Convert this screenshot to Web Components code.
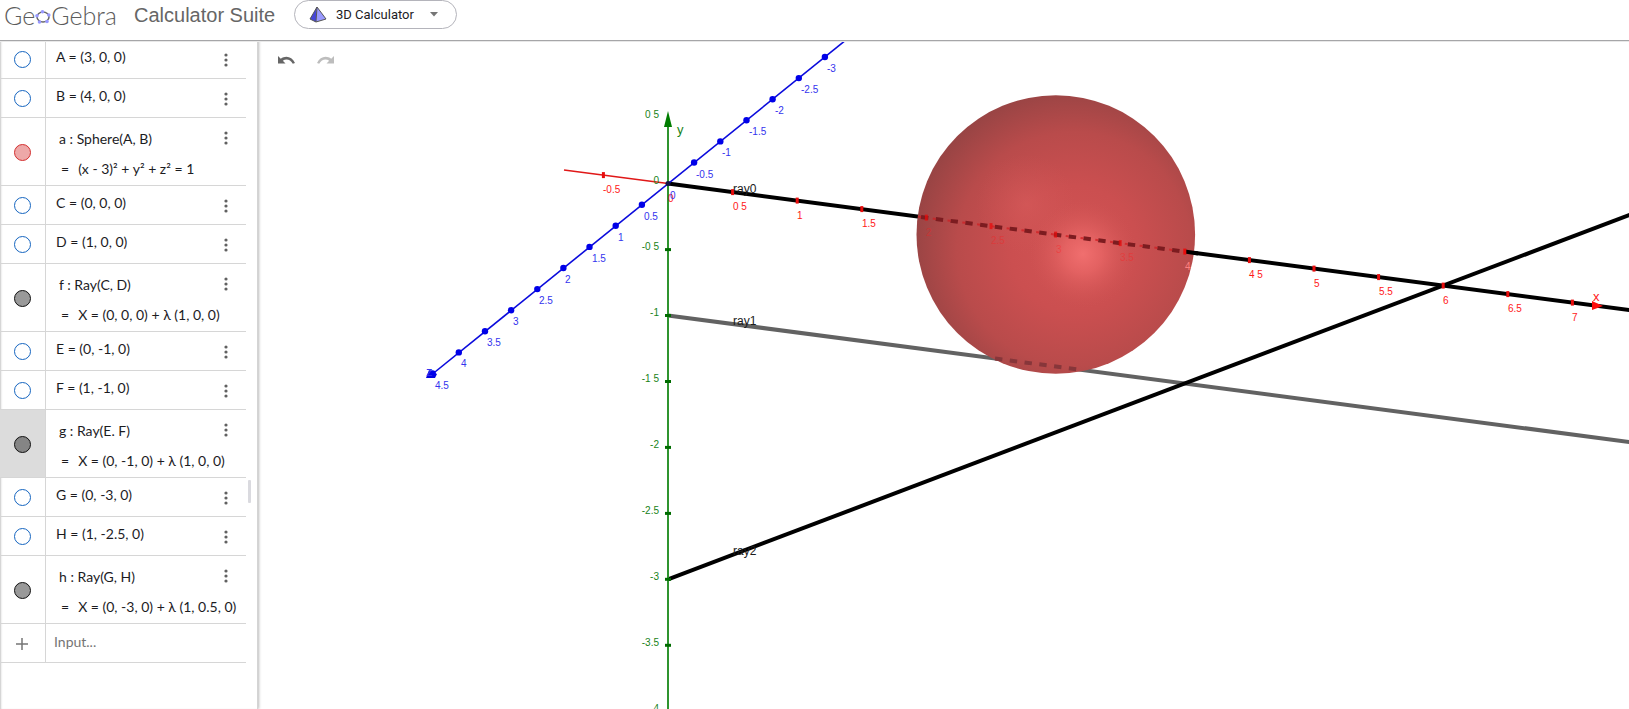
<!DOCTYPE html>
<html lang="en">
<head>
<meta charset="utf-8">
<title>GeoGebra Calculator Suite</title>
<style>
  html, body { margin: 0; height: 100%; background: #fff; }
  body { font-family: "Liberation Sans", Arial, sans-serif; overflow: hidden; }
</style>
</head>
<body>
<calc-app></calc-app>

<template id="tpl-app">
  <style>
    :host { display: flex; flex-direction: column; height: 100vh; }
    main { flex: 1; display: flex; min-height: 0; }
    graphics-view { flex: 1; min-width: 0; }
  </style>
  <app-header></app-header>
  <main>
    <algebra-panel>
      <algebra-row kind="point">A = (3, 0, 0)</algebra-row>
      <algebra-row kind="point">B = (4, 0, 0)</algebra-row>
      <algebra-row kind="sphere">a : Sphere(A, B)<span slot="value">(x - 3)² + y² + z² = 1</span></algebra-row>
      <algebra-row kind="point">C = (0, 0, 0)</algebra-row>
      <algebra-row kind="point">D = (1, 0, 0)</algebra-row>
      <algebra-row kind="ray">f : Ray(C, D)<span slot="value">X = (0, 0, 0) + λ (1, 0, 0)</span></algebra-row>
      <algebra-row kind="point">E = (0, -1, 0)</algebra-row>
      <algebra-row kind="point">F = (1, -1, 0)</algebra-row>
      <algebra-row kind="ray" selected>g : Ray(E. F)<span slot="value">X = (0, -1, 0) + λ (1, 0, 0)</span></algebra-row>
      <algebra-row kind="point">G = (0, -3, 0)</algebra-row>
      <algebra-row kind="point">H = (1, -2.5, 0)</algebra-row>
      <algebra-row kind="ray">h : Ray(G, H)<span slot="value">X = (0, -3, 0) + λ (1, 0.5, 0)</span></algebra-row>
      <algebra-input></algebra-input>
    </algebra-panel>
    <graphics-view></graphics-view>
  </main>
</template>

<template id="tpl-header">
  <style>
    :host { display: flex; align-items: flex-start; height: 39px; padding-left: 4px; box-sizing: border-box;
      background: #fff; position: relative; z-index: 2;
      box-shadow: 0 1px 0 #fff, 0 2px 0 #a6a6a8, 0 3px 0 #e8e8e8; }
    .logo { display: flex; align-items: center; width: 112px; height: 30px; color: #5c5c5c; text-decoration: none;
      font: 300 25px/30px Lato, "Open Sans", sans-serif; }
    .logo svg { flex: none; width: 16px; height: 16px; margin-top: 3px; }
    h1 { margin: 0 0 0 18px; width: 160px; font-size: 20px; line-height: 30px; font-weight: 400; color: #666; }
    .mode { display: grid; grid-template-columns: 40px 1fr 36px; align-items: center; width: 163px; height: 29px;
      box-sizing: border-box; border: 1px solid #b4b4bb; border-radius: 15px; }
    select { grid-area: 1 / 1 / 2 / 4; width: 100%; height: 27px; padding: 0 36px 0 41px; appearance: none; border: 0;
      border-radius: 14px; background: none; color: #1c1c1f; font: 13px/27px Roboto, sans-serif; }
    .mode svg { pointer-events: none; }
    .solid { grid-area: 1 / 1; width: 18px; height: 18px; margin-left: 14px; }
    .arrow { grid-area: 1 / 3; width: 8px; height: 5px; margin-left: 10px; }
  </style>
  <a class="logo" href="#" aria-label="GeoGebra home"><span>Ge</span><svg viewBox="0 0 16 16"><ellipse cx="8" cy="8" rx="6" ry="5" fill="none" stroke="#666" stroke-width="1.5"/><g fill="#9999ff"><circle cx="7.500" cy="2.700" r="1.800"/><circle cx="13.800" cy="6" r="1.800"/><circle cx="12" cy="12.500" r="1.800"/><circle cx="4.500" cy="13" r="1.800"/><circle cx="2" cy="6.800" r="1.800"/></g></svg><span>Gebra</span></a>
  <h1>Calculator Suite</h1>
  <div class="mode">
    <select aria-label="Calculator"><option>3D Calculator</option></select>
    <svg class="solid" viewBox="0 0 18 18"><path d="M8 1 1 13 7 16Z" fill="#4545d8"/><path d="M8 1 7 16 17 13Z" fill="#9999ff"/><path d="M8 1 1 13 7 16 17 13ZM8 1 7 16" fill="none" stroke="#555" stroke-width="1"/></svg>
    <svg class="arrow" viewBox="0 0 8 5"><path d="M0 0h8L4 4.500Z" fill="#757575"/></svg>
  </div>
</template>

<template id="tpl-panel">
  <style>
    :host { display: flex; position: relative; flex: none; width: 258px; box-sizing: border-box; background: #fff; z-index: 1;
      border-right: 1px solid #d4d4d4; border-radius: 0 3px 0 0;
      box-shadow: 1px 0 3px #bbb, inset 2px 0 2px -1px #c8c8c8; }
    .list { width: 246px; padding-top: 1px; }
    .thumb { position: absolute; right: 6px; top: 441px; width: 3px; height: 23px; border-radius: 1px; background: #dadadf; }
  </style>
  <div class="list" role="list"><slot></slot></div>
  <div class="thumb"></div>
</template>

<template id="tpl-row">
  <style>
    :host { display: grid; grid-template-columns: 46px minmax(0, 1fr) 30px; height: 39px; box-sizing: border-box;
      border-bottom: 1px solid #d6d6d6; color: #1c1c1f; font: 14px/18px Lato, "Noto Sans", sans-serif; }
    :host([tall]) { height: 68px; }
    .side { display: grid; place-items: center; border-right: 1px solid #d6d6d6; }
    :host([selected]) .side { background: #dcdcdc; }
    .marble { width: 17px; height: 17px; margin: 1px 1px 0 0; padding: 0; border-radius: 50%; border: 1px solid #1565c0; background: #fff;
      box-sizing: border-box; }
    :host([kind="sphere"]) .marble { border-color: #d32f2f; background: #eda8a8; }
    :host([kind="ray"]) .marble { border-color: #111; background: #999; }
    :host([selected]) .marble { background: #858585; }
    .text { padding: 8px 0 0 10px; white-space: nowrap; }
    :host([tall]) .text { padding: 12px 0 0 13px; }
    .value { display: none; margin: 12px 0 0 2px; gap: 9px; }
    :host([tall]) .value { display: flex; }
    .more { align-self: start; display: grid; place-items: center; width: 20px; height: 24px; margin: 8px 0 0; padding: 0; border: 0; background: none; }
    .more svg { width: 4px; height: 14px; }
  </style>
  <div class="side"><button class="marble" aria-label="Show or hide"></button></div>
  <div class="text"><slot></slot><div class="value"><span>=</span><slot name="value"></slot></div></div>
  <button class="more" aria-label="More"><svg viewBox="0 0 4 14"><g fill="#616161"><circle cx="2" cy="2" r="1.600"/><circle cx="2" cy="7" r="1.600"/><circle cx="2" cy="12" r="1.600"/></g></svg></button>
</template>

<template id="tpl-input">
  <style>
    :host { display: grid; grid-template-columns: 46px 1fr; height: 39px; box-sizing: border-box; border-bottom: 1px solid #d6d6d6; }
    .side { display: grid; place-items: center; border-right: 1px solid #d6d6d6; }
    button { display: grid; width: 12px; height: 12px; margin: 1px 1px 0 0; padding: 0; border: 0; background: none; }
    input { width: 100%; box-sizing: border-box; border: 0; padding: 0 8px 2px; outline: 0; background: none; font: 14px/18px Lato, sans-serif; }
    input::placeholder { color: #757575; opacity: 1; }
  </style>
  <div class="side"><button aria-label="Add"><svg viewBox="0 0 12 12"><path d="M6 0v12M0 6h12" stroke="#757575" stroke-width="1.500"/></svg></button></div>
  <input aria-label="Input" placeholder="Input...">
</template>

<template id="tpl-graphics">
  <style>
    :host { display: block; position: relative; overflow: hidden; background: #fff; }
    .scene { display: block; width: 100%; height: 100%; }
    .tools { position: absolute; left: 19px; top: 12px; display: flex; gap: 20px; }
    .tools button { width: 19px; height: 18px; padding: 0; border: 0; background: none; display: grid; place-items: center; }
    .tools svg { width: 17px; height: 8px; }
    text { font: 10px "Liberation Sans", Arial, sans-serif; }
    .name { font-size: 12px; fill: #1c1c1c; }
    .axis { font-size: 13px; }
    .x { fill: #ff1818; } .y { fill: #188318; text-anchor: end; } .z { fill: #3434ee; }
  </style>
  <svg class="scene" viewBox="258 39 1371 670" preserveAspectRatio="xMinYMin slice">
    <defs>
      <radialGradient id="body" gradientUnits="userSpaceOnUse" cx="1074" cy="249" r="180">
        <stop offset="0" stop-color="#d25454"/><stop offset=".35" stop-color="#cb4f50"/><stop offset=".65" stop-color="#b94b4b"/><stop offset=".9" stop-color="#984444"/><stop offset="1" stop-color="#8e4141"/>
      </radialGradient>
      <radialGradient id="shine" gradientUnits="userSpaceOnUse" cx="1083" cy="254" r="54">
        <stop offset="0" stop-color="#f47272" stop-opacity=".9"/><stop offset=".35" stop-color="#ee6a6a" stop-opacity=".65"/><stop offset="1" stop-color="#d25454" stop-opacity="0"/>
      </radialGradient>
      <radialGradient id="glow" gradientUnits="userSpaceOnUse" cx="1026" cy="204" r="50">
        <stop offset="0" stop-color="#d85c5c" stop-opacity=".55"/><stop offset="1" stop-color="#d05555" stop-opacity="0"/>
      </radialGradient>
    </defs>
    <g id="world"></g>
  </svg>
  <div class="tools">
    <button aria-label="Undo"><svg viewBox="0 0 17 8"><path d="M0 0v7.500h7.500L4.800 4.800C8 2.400 12.500 3.300 14.800 7.800L17 7C14 .4 7.500-.8 2.800 2.800Z" fill="#666"/></svg></button>
    <button aria-label="Redo" disabled><svg viewBox="0 0 17 8"><path d="M17 0v7.500H9.500L12.200 4.800C9 2.400 4.500 3.300 2.200 7.800L0 7C3 .4 9.500-.8 14.200 2.800Z" fill="#bdbdbd"/></svg></button>
  </div>
</template>

<script>
  class Base extends HTMLElement {
    constructor(id) {
      super();
      this.attachShadow({ mode: "open" }).append(document.getElementById(id).content.cloneNode(true));
    }
  }
  customElements.define("app-header", class extends Base { constructor() { super("tpl-header"); } });
  customElements.define("algebra-panel", class extends Base { constructor() { super("tpl-panel"); } });
  customElements.define("algebra-input", class extends Base { constructor() { super("tpl-input"); } });
  customElements.define("algebra-row", class extends Base {
    constructor() { super("tpl-row"); }
    connectedCallback() {
      this.setAttribute("role", "listitem");
      this.toggleAttribute("tall", !!this.querySelector("[slot=value]"));
    }
  });

  // Projection of the 3D world to the view: screen vectors for one unit of each axis.
  const O = [668, 183.6], X = [129.2, 17], Y = [0, 131.9], Z = [-52.3, 42.2];
  const at = (x, y, z) => [0, 1].map(i => +(O[i] + x * X[i] - y * Y[i] + z * Z[i]).toFixed(1));
  const line = (a, b, color, w, more = "") =>
    `<line x1="${a[0]}" y1="${a[1]}" x2="${b[0]}" y2="${b[1]}" stroke="${color}" stroke-width="${w}" ${more}/>`;
  const label = (x, y, cls, s, more = "") => `<text x="${Math.round(x)}" y="${Math.round(y)}" class="${cls}" ${more}>${s}</text>`;

  customElements.define("graphics-view", class extends Base {
    constructor() {
      super("tpl-graphics");
      let s = "";
      const noDot = { x: [0.5, 4.5], y: [0.5, -0.5, -1.5] };
      const num = (v, axis) => noDot[axis]?.includes(v) ? String(v).replace(".", " ") : String(v);

      // Rays and axes
      s += line(at(0, -1, 0), at(8, -1, 0), "#626262", 4);
      s += line(at(0, -3, 0), at(8, 1, 0), "#000", 4);
      s += line([564, 170], at(0, 0, 0), "#e01818", 1.5);
      s += line(at(0, 0, 0), at(8, 0, 0), "#000", 4);
      s += line([668, 120], [668, 720], "#2f942f", 2);
      s += '<path d="M668 111 672 127H664Z" fill="#007d00"/>';
      s += line([850, 36.7], [430, 376], "#0b0bdc", 1.6);
      s += '<path d="M426 378 429 370 437 374 435 378Z" fill="#0000e0"/>';

      // Sphere with the hidden parts of two rays
      const ball = '<circle cx="1055.800" cy="234.500" r="139.300" fill="url(#ID)"/>';
      s += ["body", "glow", "shine"].map(id => ball.replace("ID", id)).join("");
      s += line([921, 217], [1186, 251.8], "#7c1c20", 4, 'stroke-dasharray="7.400 7.500"');
      s += line([918, 216.6], [1184, 251.5], "#d21c20", 2, 'stroke-dasharray="3 11.900" opacity=".7"');
      s += line([995, 358.500], [1080, 369.700], "#87363a", 4, 'stroke-dasharray="7.400 7.500"');
      s += line(at(4, 0, 0), [1198, 253.4], "#000", 4);

      // Ticks and numbers
      for (let v = -0.5; v <= 7; v += 0.5) {
        const [x, y] = at(v, 0, 0);
        const hidden = v >= 2 && v < 4;
        if (v) s += line([x, y - 3], [x, y + 3], "#e80c0c", 3, hidden ? 'opacity=".75"' : "");
        s += label(x, y + 18, "x", num(v, "x"), hidden ? 'opacity=".35"' : v === 4 ? 'style="fill:#ff8080"' : "");
      }
      for (let v = 0.5; v >= -4; v -= 0.5) {
        const [x, y] = at(0, v, 0);
        if (v < 0) s += line([x - 3, y], [x + 3, y], "#006c00", 3);
        s += label(659, y + 0.500, "y", num(v, "y"));
      }
      for (let v = -3; v <= 4.5; v += 0.5) {
        const [x, y] = at(0, 0, v);
        s += v ? `<circle cx="${x}" cy="${y}" r="3.200" fill="#0000e8"/>` : `<circle cx="${x}" cy="${y}" r="2.500" fill="#151545"/>`;
        s += label(x + 2, y + 15, "z", num(v, "z"));
      }
      s += '<path d="M1592 301 1603 306 1592 310Z" fill="#ff0c0c"/>';

      s += label(677, 134, "axis", "y", 'fill="#188318"');
      s += label(1593, 301, "axis x", "x");
      s += label(426, 376, "axis z", "z");
      s += label(733, 193, "name", "ray0") + label(733, 325, "name", "ray1") + label(733, 555, "name", "ray2");
      this.shadowRoot.getElementById("world").innerHTML = s;
    }
  });
  customElements.define("calc-app", class extends Base { constructor() { super("tpl-app"); } });
</script>
</body>
</html>
